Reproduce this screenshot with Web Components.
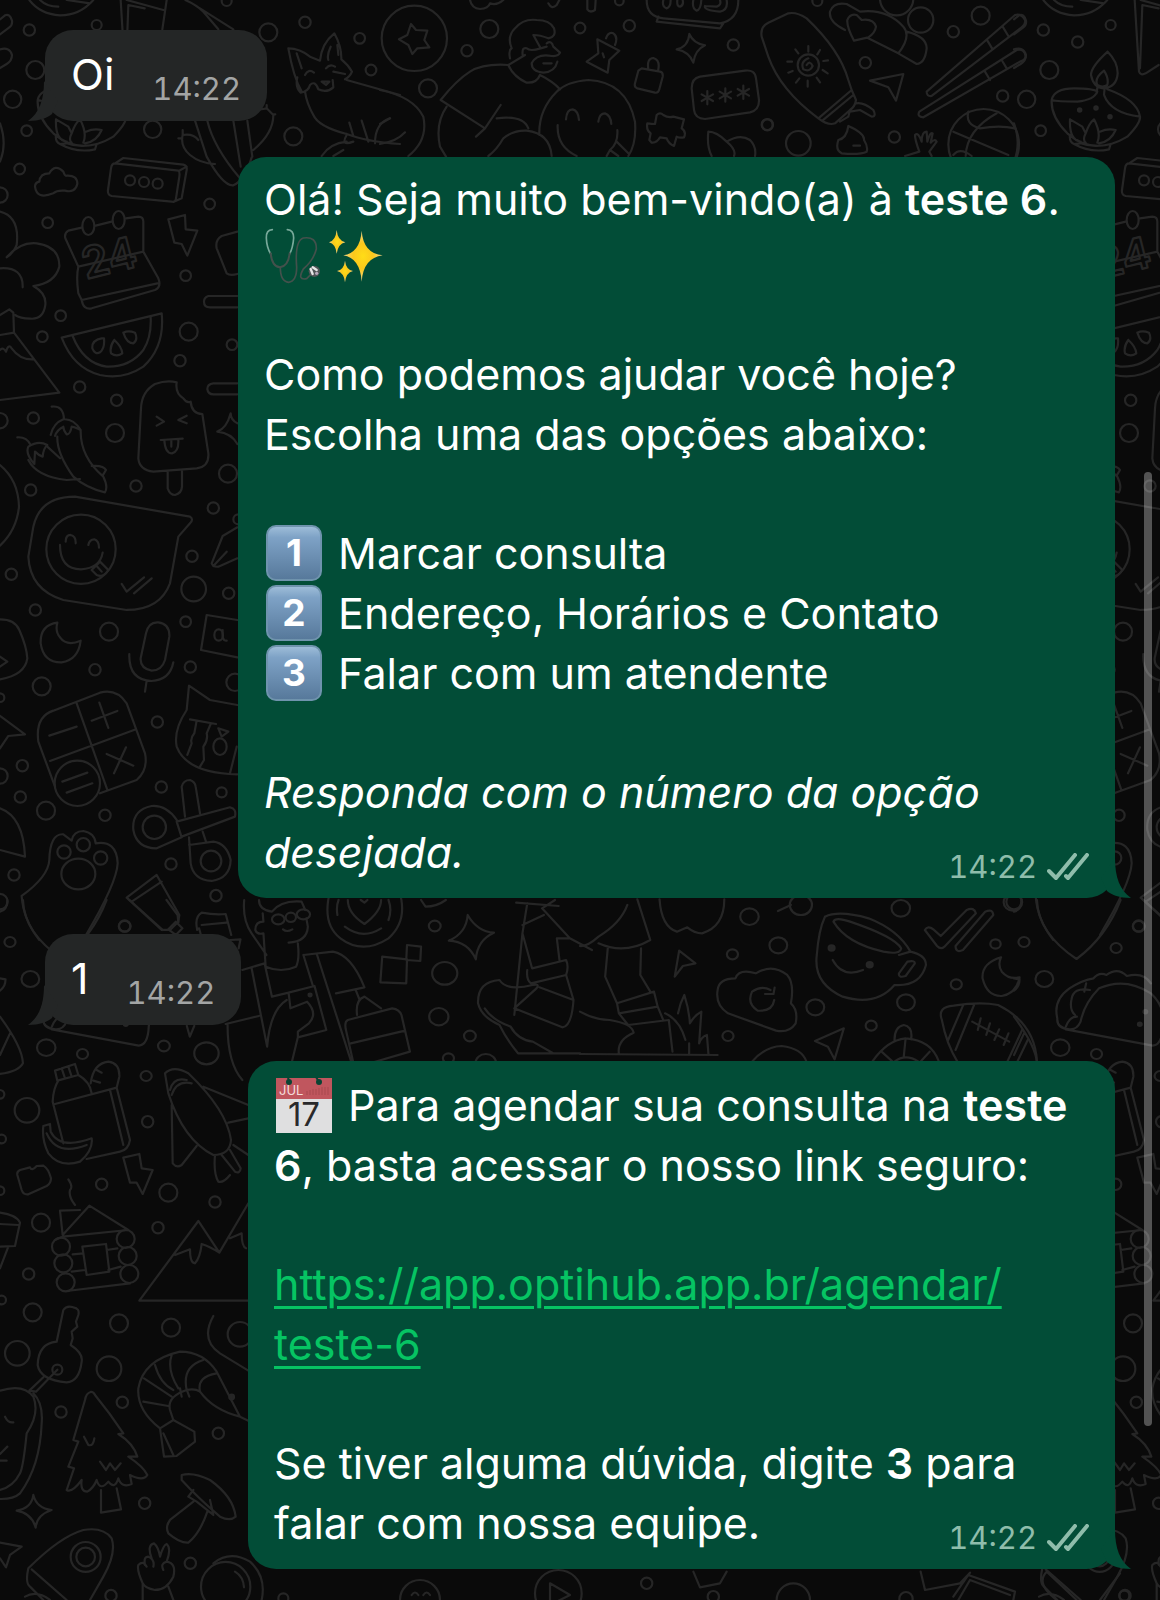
<!DOCTYPE html>
<html lang="pt-BR">
<head>
<meta charset="utf-8">
<meta name="viewport" content="width=device-width, initial-scale=1">
<title>Chat</title>
<style>
  html {
    background: #0a0a0a;
  }
  body {
    margin: 0;
    font-family: Inter, "Liberation Sans", sans-serif;
    font-size: 43px;
    line-height: 60px;
    color: #fff;
  }
  p {
    margin: 0;
  }
  p + p {
    margin-top: 59px;
  }
  .tight {
    line-height: 57px;
  }
  strong {
    font-weight: 600;
  }
  a {
    color: #06c463;
    text-decoration: underline;
    text-decoration-thickness: 3px;
    text-underline-offset: 6px;
  }
</style>
</head>
<body>
<chat-screen>
  <chat-message side="in" time="14:22"><p>Oi</p></chat-message>

  <chat-message side="out" time="14:22">
    <p class="tight">Olá! Seja muito bem-vindo(a) à <strong>teste 6</strong>. <emoji-icon name="stethoscope"></emoji-icon><emoji-icon name="sparkles"></emoji-icon></p>
    <p>Como podemos ajudar você hoje?<br>Escolha uma das opções abaixo:</p>
    <p>
      <key-cap>1</key-cap> Marcar consulta<br>
      <key-cap>2</key-cap> Endereço, Horários e Contato<br>
      <key-cap>3</key-cap> Falar com um atendente
    </p>
    <p><em>Responda com o número da opção desejada.</em></p>
  </chat-message>

  <chat-message side="in" time="14:22"><p>1</p></chat-message>

  <chat-message side="out" time="14:22" narrow>
    <p><calendar-emoji month="JUL" day="17"></calendar-emoji> Para agendar sua consulta na <strong>teste 6</strong>, basta acessar o nosso link seguro:</p>
    <p><a href="https://app.optihub.app.br/agendar/teste-6">https://app.optihub.app.br/agendar/<wbr>teste-6</a></p>
    <p>Se tiver alguma dúvida, digite <strong>3</strong> para falar com nossa equipe.</p>
  </chat-message>
</chat-screen>

<script>
// Doodles of the wallpaper. Each panel has its own origin and scale,
// dots are [cx, cy, r] and strokes is one long path.
const TILE = 1014;
const PANELS = [
  {
    x: 0, y: 0, sx: 1 / 3, repeat: true,
    dots: [[88,90,17],[290,75,15],[680,3,15],[805,97,27],[915,67,17],[1079,115,16],[1113,210,16],[106,210,27],[38,298,26],[80,392,16],[191,126,17],[458,388,26],[880,409,27],[59,507,16],[629,612,16],[143,668,16],[557,827,16],[0,585,23],[390,541,15],[432,546,15],[473,551,15]],
    solid: [[197,330,5],[246,324,5],[288,350,5]],
    ovals: [[265,678,18,27],[356,660,18,27]],
    strokes: `M0 58L15 46Q30 40 36 62Q38 75 28 82L0 103M0 148Q30 140 36 165Q36 182 20 192L0 204
      M88 0Q120 42 180 46Q240 46 280 0M120 0Q140 20 175 20M200 0L270 10
      M362 0L375 215Q380 228 395 220L434 195M378 205L385 15L434 25M380 0L490 30M500 0L487 88
      M556 0Q590 15 610 35L655 88M600 25L700 88
      M905 275Q880 230 865 145Q900 145 930 170L960 182Q965 130 1003 100Q1025 140 1024 178Q1045 195 1056 215Q1050 230 1035 238
      M890 160L905 205M992 140Q980 165 985 180M1012 135L1015 165
      M915 225Q925 205 942 218M978 205Q990 190 1005 200M1000 215L1035 222
      M892 232Q885 262 902 278Q925 275 930 255Q945 240 955 268Q980 280 1000 262L998 240M965 245L988 245L978 255Z
      M1040 240L1200 285M915 275Q920 310 940 345Q955 380 1040 402M1048 368L1060 408M1085 362L1105 425M1125 430Q1125 370 1170 355
      M1040 402Q1100 425 1200 432M1040 405Q1020 440 1060 425M1040 425Q990 430 965 468M1000 468L1030 450
      M281 155Q231 200 231 225Q238 262 268 265Q308 262 311 220Q311 185 281 155M270 212Q240 235 250 255Q265 265 280 255Q285 235 270 212
      M113 300Q120 265 180 265Q240 265 250 275Q240 300 190 305Q130 305 113 300Q110 350 160 400Q240 470 340 410Q380 370 378 350Q370 300 280 268M270 285Q290 340 378 350M250 262L248 280M272 262L270 285
      M168 358Q165 420 200 425M168 358L205 380L215 400Q225 370 240 358Q262 400 250 428M215 400Q205 420 215 428M258 395Q280 385 305 390Q290 425 255 430M168 405Q165 425 180 432L200 430Q240 445 290 432L285 448Q230 460 180 432
      M585 362L620 470Q670 560 700 556Q735 540 755 472M622 362Q640 440 720 535M700 362L722 500M742 362L757 470M548 405Q540 440 570 465Q600 490 645 492M548 405Q580 400 595 420M770 330L800 325L820 345Q820 400 760 450M548 390V405M535 415H547M800 315V325M818 343H826
      M0 370Q22 430 0 485
      M118 545Q120 520 148 520Q165 490 190 515Q195 530 200 527Q232 525 232 552Q225 580 195 572Q170 570 160 580Q110 600 105 560Q105 548 118 545
      M345 490L535 512Q540 515 538 530L528 595Q527 607 515 605L335 588Q322 585 324 570L333 505Q335 490 345 490L370 474L550 494Q562 497 560 510L545 595L520 606M536 513L560 500
      M245 683L205 692Q192 700 196 715L235 800Q228 830 235 880L245 900L472 850M235 800L430 755L475 835Q485 860 465 870L275 925Q250 930 245 900M287 677L335 665M378 655L415 650Q430 650 430 665L430 755
      M505 658L555 645L557 688L592 692L562 767L545 732L523 728Z
      M712 695L665 708Q645 720 650 745L680 820Q690 828 712 822
      M0 635Q60 650 50 735Q40 760 20 772Q60 725 110 730Q180 740 178 800Q165 850 100 858Q140 880 136 915Q130 960 90 956Q60 955 45 945M0 805Q70 800 68 862`,
    label: { text: "24", x: 258, y: 838, size: 130, rotate: -14 }
  },
  {
    x: 380, y: 0, sx: 1 / 3,
    dots: [[328,87,27],[261,152,17],[144,265,27],[600,84,16],[748,77,17],[1060,135,17],[1162,374,16],[718,3,13],[103,115,98]],
    strokes: `M0 270Q100 290 130 350Q145 420 85 468M0 372L30 355M0 432Q50 425 75 397
      M93 72L108 90L142 92L133 120L148 142L112 145L97 162L85 135L57 118L82 105Z
      M385 195L435 165M390 175Q385 150 395 145Q380 110 405 85Q430 55 470 60Q510 60 522 85Q530 110 505 115Q480 105 460 105L482 145Q450 155 440 145Q425 140 428 165M482 145L500 140M500 130Q515 120 520 140L540 158Q535 170 515 168Q470 160 455 190Q455 215 490 218Q525 215 532 185M490 190L515 190M385 195Q400 230 440 248Q470 250 480 225
      M385 195Q310 190 270 215Q230 240 182 300L315 385L362 315M315 385L288 410M350 355Q430 345 445 385M480 225Q520 245 540 268M200 320Q165 370 180 440L198 470M325 468Q350 450 370 415Q400 390 440 392Q510 400 515 468
      M478 405Q475 330 530 275Q560 245 625 240Q740 245 765 365Q770 430 745 468M558 358Q560 328 578 328Q595 332 597 360M655 365Q658 340 675 340Q692 345 694 372M533 375Q530 440 590 468M712 390Q715 430 690 450L680 468M690 450L715 468M710 425L745 460
      M652 118L718 152L688 180L683 218L620 185L655 160ZM668 160L672 172M678 115Q685 95 700 100Q715 110 705 135
      M785 205L840 215Q850 217 848 230L838 268Q835 280 825 278L772 265Q762 262 765 250L775 212ZM805 207Q800 175 820 174Q842 180 834 213
      M928 102Q940 130 975 136Q945 150 940 188Q928 155 890 148Q925 140 928 102
      M960 230L1095 212Q1125 208 1128 235L1137 300Q1138 330 1110 337L975 357Q945 357 942 330L935 265Q935 235 960 230
      M982 273V313M965 283L999 303M999 283L965 303M1036 265V305M1019 275L1053 295M1053 275L1019 295M1090 257V297M1073 267L1107 287M1107 267L1073 287
      M830 345Q840 335 850 345Q865 355 880 350L912 358L905 385Q920 395 912 412Q900 415 890 410L882 438Q865 430 860 415L840 412Q830 430 815 428L808 420L812 400Q798 390 802 370Q815 372 825 372Z
      M995 468Q980 440 985 395Q1010 395 1040 425Q1070 450 1062 468M1040 425Q1080 400 1110 420Q1130 440 1125 468
      M800 0Q800 50 850 55L1020 70Q1075 60 1075 0M835 50L830 65L1020 85L1030 70M850 0Q845 20 860 25Q872 22 872 0M892 0Q890 20 900 20Q912 15 908 0M940 0Q935 25 950 32Q962 30 964 0M975 18Q970 30 1020 35Q1045 30 1040 0M975 18L1010 20Q1025 15 1020 0
      M270 0Q275 25 300 27Q325 25 330 10Q350 18 370 0M505 10Q515 30 530 15L538 0M622 0L622 28Q630 40 645 30L647 0`
  },
  {
    x: 760, y: 0, sx: 1 / 3,
    dots: [[172,3,15],[580,95,17],[482,60,38],[662,47,27],[316,188,17],[115,430,37],[22,374,17],[403,411,17],[728,288,17],[410,-4,50],[145,195,32],[671,433,106]],
    strokes: `M5 110Q0 80 25 68L85 40Q110 35 140 55Q240 150 265 240L275 270L175 355Q60 270 25 170ZM275 270L288 300Q285 320 270 330L225 370Q205 378 175 355M187 362L280 285M270 330L265 350L240 365M288 310Q310 305 340 330Q350 350 335 350L300 330L270 335
      M140 195Q150 180 158 198Q150 217 130 208Q120 185 145 175M145 155V138M172 163L180 150M190 183L204 181M188 210L203 220M170 233L180 247M143 242V260M118 235L108 248M98 213L85 218M96 185H82M115 160L106 148
      M255 90Q205 65 210 35Q220 5 260 12L300 35Q380 25 430 80Q455 110 415 160L325 115M440 95Q500 110 500 145Q495 190 470 192L415 160M282 122Q260 80 262 60Q270 40 290 45Q300 55 305 60Q340 55 348 80Q345 100 325 112Z
      M330 242L430 222L408 302L385 262Z
      M500 275L765 45Q785 40 795 60Q798 72 785 82L515 288Q500 290 500 275M478 335L770 150Q795 145 797 170Q795 180 780 185L490 352Q470 350 478 335M728 80L745 108M680 118L698 148M675 215L690 240M725 180L740 205
      M265 378Q315 400 312 420Q325 440 320 455Q300 465 245 460Q225 450 235 420Q260 415 265 378M280 437H300
      M435 468L478 455Q465 420 465 405Q475 395 485 425Q485 395 500 395L502 425Q510 395 518 400L512 428Q525 415 530 425L508 455L515 468
      M580 395L745 465M625 335Q615 375 660 385Q720 375 765 385M710 340Q620 390 617 468M580 465Q600 440 635 468`
  },
  {
    x: 0, y: 280, sx: 1 / 3, repeat: true,
    dots: [[182,107,16],[127,170,16],[566,155,27],[696,194,16],[540,242,17],[239,321,17],[350,361,17],[100,414,17],[345,459,27],[0,422,23],[684,581,27],[92,630,17],[408,618,17],[640,684,17],[576,829,17],[581,927,37],[686,940,17],[34,883,17],[106,990,17],[715,718,15],[557,1025,16],[243,808,104]],
    strokes: `M0 105L28 88L40 98L42 158L178 338L0 360M0 165L42 158M0 210Q10 200 18 215Q25 190 35 205Q60 240 100 238
      M185 173L485 100Q495 200 430 260Q370 300 300 285Q220 265 185 173M218 168Q250 250 320 260Q390 262 430 210Q455 170 452 112M305 175Q275 180 277 205Q285 225 300 217Q315 205 312 175ZM343 180Q328 200 333 220Q350 232 367 220Q365 200 343 180M370 158Q385 150 405 158Q415 180 400 190Q380 190 370 158
      M712 48H625Q612 52 612 65Q612 82 630 82H712M712 310H640Q622 312 622 327Q624 343 640 343H712
      M530 307Q500 300 465 312Q425 335 423 385L415 535Q418 570 460 575L590 565Q628 560 625 520L607 402Q575 402 572 365Q560 370 550 355Q525 340 530 307M503 575V625Q510 645 525 645Q545 640 546 620V570M470 410L492 425L470 437M560 407L535 420L560 430M482 480L548 476M493 480Q495 520 516 520Q537 515 535 478M514 480V500
      M712 430Q692 420 692 400Q680 445 652 455Q695 460 712 492
      M155 380Q190 375 192 418M152 465Q160 430 190 418Q220 415 242 450Q220 440 215 440Q210 465 200 463Q190 450 190 440Q170 450 165 468M172 470Q170 520 220 590Q260 625 315 637Q325 620 310 590Q240 530 242 450M52 472Q80 470 92 495M103 552Q75 520 85 500Q115 480 142 495Q130 505 128 530Q115 525 105 515L103 552M85 540Q110 590 200 600L240 597M142 500L180 535M275 558Q310 555 318 570L310 583
      M0 555Q55 600 57 680Q50 750 0 797
      M100 740Q120 650 225 650L570 710Q582 718 570 730L535 770L510 910Q480 990 380 990L190 960Q90 930 85 830ZM197 785Q197 765 212 765Q228 768 227 790M265 795Q268 778 283 778Q297 783 297 803M180 795Q180 868 243 868Q300 865 308 818M275 870L300 845L325 870Q310 895 290 885ZM290 858L305 875
      M365 912L380 935L432 892M402 940L455 895M712 742L668 768L635 850Q640 862 655 860L712 835M640 858L680 815`
  },
  {
    x: 0, y: 600, sx: 1 / 3, repeat: true,
    dots: [[327,95,27],[285,209,17],[125,259,27],[571,201,17],[472,366,17],[67,497,17],[0,528,23],[61,591,17],[138,632,27],[315,646,17],[484,561,17],[665,577,15],[42,825,17],[0,905,23],[513,792,17],[648,887,17],[374,978,17],[705,247,26],[0,293,13],[463,682,35],[633,783,31],[192,756,20],[250,734,20],[302,774,20],[232,550,68]],
    ovals: [[235,822,51,46],[660,440,20,25],[656,105,13,17]],
    strokes: `M0 58Q45 58 58 90Q80 140 82 175Q75 225 0 238M0 170L22 185L0 200
      M172 68Q120 75 122 130Q130 188 185 187Q235 180 242 122Q200 140 180 112Q165 95 172 68
      M438 100Q445 65 475 67Q510 72 508 110L495 180Q485 212 455 212Q420 205 422 175ZM388 162Q385 240 455 243Q510 240 520 187M440 242L435 275
      M712 60L620 45L603 150L712 172M668 90Q665 125 680 122
      M712 315L630 300L567 257L560 330Q520 390 530 440Q560 520 712 523M570 358L648 372M590 362L583 400Q570 415 575 430L562 465M632 372L620 400Q625 420 610 440L612 480L600 500M655 385L685 395L665 410ZM710 440L690 520
      M0 348L75 403L25 408L0 445
      M165 560L115 425Q105 350 160 332L300 278Q350 265 380 310L435 460Q445 510 410 540L300 580M230 310L322 570M150 483L408 388M148 407L230 380M275 362L352 333M298 308L325 384M320 462L400 497M378 442L342 520M187 545L262 518M200 578L277 550
      M0 625Q70 650 75 770L0 750
      M530 660Q500 615 455 618Q395 630 400 690Q410 745 470 745L545 712L530 665L690 622Q710 625 705 650L545 710M555 650L545 560Q550 540 570 540Q585 545 587 560L600 640M567 712L572 790Q580 840 635 843Q690 835 692 780Q680 730 640 725L567 735M608 695L618 725
      M65 888Q145 830 148 780Q150 700 190 703L215 722Q220 693 250 693Q285 700 287 730Q350 720 353 790Q350 850 258 1005M65 888Q70 960 118 1020
      M380 893L470 825L538 945L535 965L510 990L485 990ZM395 905L485 845`
  },
  {
    x: 0, y: 900, sx: .37, repeat: true,
    dots: [[337,79,16],[27,126,15],[82,237,24],[125,443,25],[223,462,15],[443,438,16],[558,460,33],[395,528,15],[276,144,15]],
    solid: [[340,373,5],[355,335,5]],
    strokes: `M62 0Q65 100 169 177Q250 110 288 0
      M117 355Q105 300 150 265Q185 240 215 235Q230 215 250 225Q280 200 305 228Q350 215 370 250M150 388Q115 385 117 355M140 388L375 437Q400 435 402 380Q410 320 370 280Q300 230 230 265Q190 310 180 365Q170 390 150 388M195 250L190 275M205 270Q160 260 155 300Q150 330 165 345M140 380Q150 350 170 350
      M350 0L440 90M450 0L480 45L482 68M455 88L475 65L493 85L475 105Z
      M533 90Q525 50 545 38Q580 45 610 42L625 105M545 75L612 68M538 85L543 105M622 120L650 118L645 145M505 378L513 410L525 378
      M0 235L15 238Q15 260 0 272M0 35Q20 30 20 0M0 350Q60 440 62 490Q50 515 0 522M28 398L0 465`
  },
  {
    x: 0, y: 900, sx: .37,
    dots: [[1175,78,16],[1202,220,34],[1186,350,26],[1270,408,16],[1212,475,15],[1313,490,28]],
    ovals: [[752,58,17,15],[786,52,14,14],[820,43,18,15]],
    solid: [[838,285,4]],
    strokes: `M660 0Q655 60 680 100L720 165M700 0Q700 30 735 35Q760 0 815 5L825 30M710 40L712 65Q690 65 690 90Q695 105 712 100L718 200Q760 220 800 200Q810 180 805 130M780 128Q830 125 832 80L828 55M765 88Q775 98 790 88
      M655 210L715 190L735 290L780 278M680 205L722 440Q730 330 775 300M820 165L900 155Q950 165 985 262L908 280M820 165L845 255M857 165L950 488M780 278L850 258L882 390L805 412L788 490M780 278L785 325L830 305Q860 340 835 370L805 395V412M610 372L700 348M615 375Q615 490 655 540
      M955 488L935 390Q930 365 940 360L1060 325Q1080 328 1085 345L1108 455L1000 490M948 430L1095 392M965 345Q960 300 985 290L1030 325M962 272L972 300
      M893 -30Q868 70 920 115Q980 165 1050 115Q1105 60 1078 -30M912 45Q908 20 915 0M932 80Q980 120 1030 85M1050 60Q1060 30 1050 0M940 0Q940 40 985 72Q1030 35 1030 0M975 0L985 8L993 0
      M1033 170L1100 178L1098 250L1028 247ZM1100 135L1138 140L1136 183L1098 180Z
      M1264 45Q1290 95 1335 98Q1290 120 1286 178Q1265 125 1213 122Q1260 100 1264 45M1138 0L1150 20Q1180 20 1205 0
      M1425 10L1412 100L1390 345M1412 75L1470 45M1412 100L1438 205L1530 180Q1538 200 1530 225L1435 250Q1422 240 1425 210M1512 180L1505 115H1540L1465 25L1500 0M1395 8L1510 18
      M1530 225L1550 300Q1545 380 1520 382L1390 325L1450 265Q1460 250 1440 255Q1370 275 1350 240Q1290 245 1292 310Q1300 350 1350 375Q1370 420 1400 460H1568M1310 325Q1330 360 1380 380Q1400 420 1440 425L1495 460M1550 300L1458 262M1540 115L1600 150`
  },
  {
    x: 580, y: 840, sx: .37,
    dots: [[458,230,25],[597,195,30],[867,205,25],[1170,187,25],[536,316,24],[412,343,15],[1123,312,14],[1017,433,15],[881,487,24],[636,502,24],[787,557,15],[400,588,15]],
    solid: [[680,324,8],[783,374,8]],
    strokes: `M1138 352Q1085 370 1088 415Q1100 470 1140 468Q1180 460 1188 412Q1160 420 1140 395Q1128 375 1138 352
      M662 230Q700 210 780 235Q860 270 893 335Q935 345 935 375Q920 440 850 435Q800 500 710 470Q630 430 640 345Q645 270 662 230M685 245Q690 230 730 245Q850 290 868 325Q865 345 820 335Q720 310 685 245M885 365Q905 360 905 370L880 408Q860 415 862 400ZM862 345L893 335M683 360Q710 415 765 390
      M932 270Q940 255 955 268L975 288L1045 210Q1065 200 1070 220L985 320Q975 330 965 318ZM1015 318L1095 215Q1115 205 1117 225L1035 330Q1015 340 1015 318
      M372 450Q375 415 420 415Q430 385 475 400Q520 370 560 405Q580 430 570 490Q590 510 583 550Q565 580 530 572L400 520Q365 495 372 450M515 450Q490 435 465 455Q450 490 480 512Q520 515 525 480M500 462H523L526 443
      M268 332L312 370L278 378L256 410ZM635 603L713 565L688 658L670 620Z
      M215 178Q220 260 262 275L290 262Q310 280 330 280Q390 260 390 178M535 213L570 195
      M0 318Q20 320 50 290Q110 250 128 195M155 178L190 300Q120 345 50 310M75 325L68 410L100 490M165 325L163 405L190 455M100 490L200 455L210 500L105 520ZM105 520L130 555L240 540L250 635M210 500L225 540M0 515Q40 540 80 540Q140 550 145 578Q100 600 105 640M0 642L372 645
      M230 520Q270 540 285 600M265 520Q270 490 282 465Q295 510 297 550Q310 525 328 515L322 610Q328 590 343 585L347 640M295 610V640
      M465 665Q500 620 545 618Q600 625 612 665M790 665Q830 600 880 595Q950 600 970 665M850 600Q850 560 875 555Q900 560 895 598M880 595L875 650M850 665Q880 640 915 665M815 635L845 665M945 635L920 665
      M1020 665Q990 610 978 540Q965 500 1010 497Q1080 485 1130 495Q1230 550 1235 665M1035 497L995 600M1065 495L1015 630M1195 570L1155 665M1210 600L1182 665M1060 545L1160 605M1083 535L1075 570M1108 550L1098 585M1133 568L1120 600M1158 580L1145 615`
  },
  {
    x: 0, y: 1040, sx: 1 / 3, repeat: true,
    dots: [[81,211,37],[0,163,13],[443,245,17],[5,297,13],[505,458,27],[305,433,17],[645,486,17],[474,563,17],[123,548,27],[86,702,17],[0,452,13],[5,780,13],[183,620,27],[190,670,27],[197,727,27],[377,597,27],[383,648,27],[388,702,27]],
    strokes: `M165 92L225 72L235 105L172 122ZM185 85L195 115M205 80L215 110M175 122Q160 145 158 185L190 310M235 105Q270 125 275 160M165 192L350 143L390 300Q385 330 360 335L260 357M330 150L370 315M272 130Q280 70 325 65Q360 70 358 110L350 143M290 90L305 98M280 122L300 128
      M130 258L150 252L152 275Q180 330 275 295Q280 330 240 365Q180 385 145 340Q125 300 130 258M140 280Q170 350 260 315
      M52 405Q50 395 60 390L90 382Q95 395 110 378L130 377Q145 385 153 415Q153 430 140 438L85 463Q70 465 65 450Z
      M370 353L418 342L425 385L458 390L428 462L410 428L390 428Z
      M495 100Q520 75 565 100Q680 210 693 300Q690 345 640 345Q550 300 505 160ZM515 165Q530 120 575 130M510 150Q520 110 560 120M610 140L745 195M685 248L745 235M515 195L518 370Q530 385 545 375L590 318M645 345Q640 400 655 425Q670 430 690 405M665 345L705 395Q720 402 722 385L690 330M700 315L745 345
      M240 510L180 512L188 585L268 497L385 570L188 590L165 600M218 643L250 640M215 695L255 690M320 630L352 625M325 690L362 680M200 753L390 730M247 620L318 612L328 695L260 705ZM205 418Q220 440 210 450Q205 470 225 495
      M745 782H418L595 543L658 638L745 490M525 645L570 628Q570 670 585 670Q600 655 605 612Q630 620 658 638M690 595L725 580Q725 620 738 625
      M0 518Q50 525 60 548L45 618L0 620M0 552L55 555M25 620L0 685`
  },
  {
    x: 0, y: 1300, sx: 1 / 3, repeat: true,
    dots: [[98,37,27],[52,160,37],[357,70,27],[327,206,37],[513,83,27],[183,336,17],[367,307,17],[655,400,17],[434,610,17],[571,790,17],[333,887,17],[850,895,15],[172,209,15],[720,103,37],[257,771,45],[257,771,28],[677,860,74]],
    solid: [[695,291,7]],
    strokes: `M170 125L190 30Q200 15 220 22Q240 25 235 45L228 65L232 80L215 95L218 115L212 135Q250 160 245 185Q238 245 200 247Q120 240 113 195Q115 130 170 125M172 209L108 275L88 272L130 232
      M0 272Q70 250 100 290Q120 340 80 400Q70 500 60 520Q40 560 0 570M100 280Q130 310 125 370Q120 500 60 580Q40 598 0 597M15 350Q25 370 40 367M0 462L22 440M0 482H20
      M272 276Q258 280 255 300L220 420L235 425L205 500L222 505L200 570Q215 580 245 540Q240 575 262 575Q280 565 290 540Q300 575 325 545Q345 570 355 535Q365 565 395 552L390 525Q430 545 442 525Q430 500 385 470L412 470Q400 430 355 402L370 400Q330 340 285 285Q280 275 272 276M303 570V638L363 628L350 565M252 410L265 435Q280 440 283 415M300 485L318 510L330 490L345 510L362 490
      M480 385Q410 330 415 265Q430 180 540 155Q610 155 650 215L720 350Q640 330 600 275Q585 265 560 270Q500 290 510 330L520 360L480 385M520 360L583 395L585 425L530 468L492 470L480 385M490 400L520 465M430 305L505 318M432 235L515 290M465 195Q480 250 520 270M515 165Q500 210 535 265M560 270Q545 200 610 180M600 275Q590 230 650 220M540 265L545 290M560 268L568 290M720 350L745 362M640 48Q600 120 660 160L745 212
      M100 585Q110 625 155 630Q110 645 107 683Q95 640 50 632Q95 625 100 585M0 728L65 740L30 765L18 802L0 775
      M545 525Q580 515 630 540Q700 590 707 650Q690 665 660 650Q590 590 545 540ZM580 570L565 590L590 605L640 645L630 600M580 605L510 660Q495 680 505 700Q540 730 565 728Q600 700 622 635
      M130 900L90 860Q75 850 85 805Q180 710 250 690Q310 680 335 715Q350 760 310 830L270 900M95 808L200 900M75 890Q110 870 150 900
      M428 900V850Q410 810 415 795Q430 780 440 800M435 795Q430 770 445 770Q465 780 460 800M455 775Q440 735 462 730Q475 740 480 770Q490 735 500 732Q515 745 500 785Q530 790 520 830Q500 870 465 870Q435 865 428 850M500 785Q480 790 490 810M505 860L520 900
      M640 790Q690 750 750 785Q800 830 785 900M705 815Q730 830 732 862`
  },
  {
    x: 900, y: 1500, sx: 1 / 3,
    dots: [[673,287,15],[18,296,20],[-1440,300,60],[-1025,280,70],[-320,300,50],[-760,250,17],[-560,290,17]],
    strokes: `M62 215L75 270L180 250L210 218M160 290L205 225L345 275L340 300M175 300L210 240L330 285M470 300Q405 250 440 215L530 300M660 220L600 300
      M-1050 250L-990 285L-1050 315ZM-1465 285Q-1455 270 -1445 285M-1430 285Q-1420 270 -1410 285M-620 215L-600 262L-540 250L-520 215`
  }
];

class ChatWallpaper extends HTMLElement {
  constructor() {
    super();
    this.attachShadow({ mode: "open" });
    this.shadowRoot.innerHTML = `
      <style>
        :host {
          position: absolute;
          inset: 0;
          overflow: hidden;
          background: #0a0a0a;
        }
        svg {
          display: block;
          width: 1160px;
          height: 1600px;
          fill: none;
          stroke: #262626;
          stroke-width: 2.2;
          stroke-linecap: round;
          stroke-linejoin: round;
        }
        svg * {
          vector-effect: non-scaling-stroke;
        }
        .solid {
          fill: #262626;
        }
        text {
          font-family: Inter, sans-serif;
          font-weight: 600;
        }
      </style>
      <svg viewBox="0 0 1160 1600" aria-hidden="true">${PANELS.map(p => this._panel(p)).join("")}</svg>`;
  }

  _panel(panel) {
    const circle = cls => ([cx, cy, r]) => `<circle class="${cls}" cx="${cx}" cy="${cy}" r="${r}"/>`;
    let shapes = `<path d="${panel.strokes}"/>`;
    shapes += panel.dots.map(circle("dot")).join("");
    shapes += (panel.solid || []).map(circle("solid")).join("");
    shapes += (panel.ovals || [])
      .map(([cx, cy, rx, ry]) => `<ellipse cx="${cx}" cy="${cy}" rx="${rx}" ry="${ry}"/>`)
      .join("");
    if (panel.label) {
      const l = panel.label;
      shapes += `<text x="${l.x}" y="${l.y}" font-size="${l.size}" transform="rotate(${l.rotate} ${l.x} ${l.y})">${l.text}</text>`;
    }
    const xs = panel.repeat ? [panel.x, panel.x + TILE] : [panel.x];
    return xs
      .map(x => `<g transform="translate(${x} ${panel.y}) scale(${panel.sx} .3333)">${shapes}</g>`)
      .join("");
  }
}

class ChatScreen extends HTMLElement {
  constructor() {
    super();
    this.attachShadow({ mode: "open" });
    this.shadowRoot.innerHTML = `
      <style>
        :host {
          display: block;
          position: relative;
          overflow: hidden;
          min-height: 100vh;
        }
        main {
          position: relative;
          display: flex;
          flex-direction: column;
          align-items: flex-start;
          gap: 36px;
          padding: 30px 45px;
        }
        .thumb {
          position: absolute;
          top: 472px;
          right: 8px;
          width: 8px;
          height: 954px;
          border-radius: 4px;
          background: rgba(255, 255, 255, 0.3);
        }
      </style>
      <chat-wallpaper></chat-wallpaper>
      <main><slot></slot></main>
      <div class="thumb"></div>`;
  }
}

class ChatMessage extends HTMLElement {
  constructor() {
    super();
    this.attachShadow({ mode: "open" });
    this.shadowRoot.innerHTML = `
      <style>
        :host {
          --bubble: #242626;
          --meta: #a3a5a5;
          position: relative;
          display: grid;
          grid-template-columns: auto auto;
          column-gap: 38px;
          box-sizing: border-box;
          padding: 14px 26px 17px;
          border-radius: 28px;
          background: var(--bubble);
        }
        :host([side="out"]) {
          --bubble: #024d37;
          --meta: #8fbdab;
          align-self: flex-end;
          grid-template-columns: auto;
          max-width: 877px;
          padding-bottom: 16px;
        }
        :host([narrow]) {
          max-width: 867px;
        }
        .text,
        .meta {
          grid-row: 1;
        }
        .meta {
          display: flex;
          align-items: center;
          align-self: end;
          justify-self: end;
          gap: 10px;
          font-size: 31px;
          line-height: 30px;
          font-variant-numeric: tabular-nums;
          color: var(--meta);
        }
        :host([side="out"]) .text,
        :host([side="out"]) .meta {
          grid-column: 1;
        }
        .checks {
          display: none;
          width: 42px;
          height: 28px;
          fill: none;
          stroke: var(--meta);
          stroke-width: 4;
          stroke-linecap: round;
          stroke-linejoin: round;
        }
        :host([side="out"]) .checks {
          display: block;
        }
        .tail {
          position: absolute;
          left: -17px;
          bottom: 0;
          width: 30px;
          height: 40px;
          fill: var(--bubble);
          transform: scaleX(-1);
        }
        :host([side="out"]) .tail {
          left: auto;
          right: -16px;
          transform: none;
        }
      </style>
      <svg class="tail" viewBox="0 0 30 40" aria-hidden="true">
        <path d="M14 0C14 20 19 32 30 40C18 40 11 37 6 33L0 20Z"/>
      </svg>
      <div class="text"><slot></slot></div>
      <div class="meta">
        <time></time>
        <svg class="checks" viewBox="0 0 42 28" aria-hidden="true">
          <path d="M2 18L9 25L28 2M19 23L21 25L40 2"/>
        </svg>
      </div>`;
  }

  connectedCallback() {
    this.shadowRoot.querySelector("time").textContent = this.getAttribute("time");
  }
}

class KeyCap extends HTMLElement {
  constructor() {
    super();
    this.attachShadow({ mode: "open" });
    this.shadowRoot.innerHTML = `
      <style>
        :host {
          display: inline-block;
          overflow: hidden;
          box-sizing: border-box;
          width: 56px;
          height: 56px;
          margin: 0 4px 0 2px;
          vertical-align: -12px;
          border: 2px solid #6f93ad;
          border-radius: 10px;
          background: linear-gradient(#9dbcd8, #7ea2c6 20%, #57799b);
          font-size: 37px;
          font-weight: 700;
          line-height: 52px;
          text-align: center;
        }
      </style>
      <slot></slot>`;
  }
}

class CalendarEmoji extends HTMLElement {
  constructor() {
    super();
    this.attachShadow({ mode: "open" });
    this.shadowRoot.innerHTML = `
      <style>
        :host {
          display: inline-block;
          overflow: hidden;
          width: 56px;
          height: 56px;
          margin: 0 4px 0 2px;
          vertical-align: -12px;
        }
        svg {
          display: block;
        }
      </style>
      <svg width="56" height="56" viewBox="0 0 56 56">
        <path d="M0 1H56V22H0Z" fill="#c0565e"/>
        <path d="M0 22H56V56H0Z" fill="#dfdfe0"/>
        <path d="M31 18V14M34 18V13M37 18V12M40 18V12M43 18V11M46 18V10M49 18V10M52 18V10" stroke="#a8484f"/>
        <circle cx="13" cy="5" r="3" fill="#0a4434"/>
        <circle cx="43" cy="5" r="3" fill="#0a4434"/>
        <path d="M12 0L13 5M40 0L43 5" stroke="#0a4434" stroke-width="2"/>
        <text class="month" x="3" y="18" font-size="13" fill="#f4dcdc"></text>
        <text class="day" x="28" y="49" font-size="33" text-anchor="middle" fill="#29292b"></text>
      </svg>`;
  }

  connectedCallback() {
    this.shadowRoot.querySelector(".month").textContent = this.getAttribute("month");
    this.shadowRoot.querySelector(".day").textContent = this.getAttribute("day");
  }
}

const EMOJI = {
  stethoscope: `
    <svg width="56" height="56" viewBox="45 32 168 168" fill="none" stroke-linecap="round">
      <path d="M67 37Q48 38 49 62Q50 90 62 110M112 37Q131 38 131 62Q129 90 119 110" stroke="#78a99a" stroke-width="5"/>
      <path d="M62 108Q66 148 90 150Q115 146 119 108" stroke="#43514c" stroke-width="6"/>
      <path d="M91 150Q91 193 116 195Q140 192 140 150Q134 70 160 62Q200 56 199 95Q190 130 160 155Q140 190 170 184L182 172" stroke="#43514c" stroke-width="5"/>
      <circle cx="193" cy="162" r="17" fill="#4f5456"/>
      <path d="M182 155L188 170M188 150L200 158" stroke="#e6e6e6" stroke-width="7"/>
      <circle cx="200" cy="168" r="5" fill="#b9a9bb"/>
    </svg>`,
  sparkles: `
    <svg width="60" height="56" viewBox="223 32 180 168">
      <defs>
        <radialGradient id="gold">
          <stop offset="0" stop-color="#ffdc17"/>
          <stop offset=".5" stop-color="#fbc81c"/>
          <stop offset="1" stop-color="#f3d58a"/>
        </radialGradient>
      </defs>
      <g fill="url(#gold)">
        <path d="M339 40Q344 108 402 114Q344 122 339 193Q334 122 284 114Q334 106 339 40"/>
        <path d="M264 38Q267 70 290 75Q268 80 264 109Q261 80 241 75Q261 70 264 38"/>
        <path d="M289 130Q292 157 313 161Q292 166 289 195Q286 166 265 161Q286 157 289 130"/>
      </g>
    </svg>`
};

class EmojiIcon extends HTMLElement {
  constructor() {
    super();
    this.attachShadow({ mode: "open" });
  }

  connectedCallback() {
    this.shadowRoot.innerHTML = `
      <style>
        :host {
          display: inline-block;
          overflow: hidden;
          height: 56px;
          margin: 0 1px;
          vertical-align: -12px;
        }
        svg {
          display: block;
        }
      </style>
      ${EMOJI[this.getAttribute("name")]}`;
  }
}

customElements.define("chat-wallpaper", ChatWallpaper);
customElements.define("chat-screen", ChatScreen);
customElements.define("chat-message", ChatMessage);
customElements.define("key-cap", KeyCap);
customElements.define("calendar-emoji", CalendarEmoji);
customElements.define("emoji-icon", EmojiIcon);
</script>
</body>
</html>
